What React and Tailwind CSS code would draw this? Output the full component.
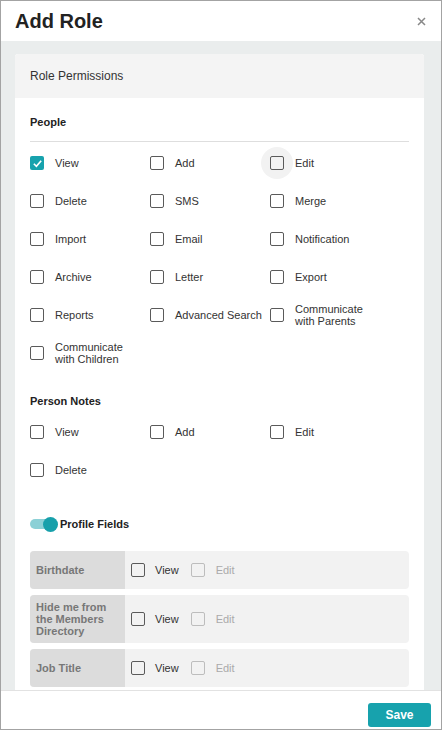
import React, { useState } from 'react';

const font = { fontFamily: '"Liberation Sans", Arial, sans-serif' };

const people = [
  ['View', 'Add', 'Edit'],
  ['Delete', 'SMS', 'Merge'],
  ['Import', 'Email', 'Notification'],
  ['Archive', 'Letter', 'Export'],
  ['Reports', 'Advanced Search', 'Communicate with Parents'],
  ['Communicate with Children'],
];

const notes = [
  ['View', 'Add', 'Edit'],
  ['Delete'],
];

const profileFields = ['Birthdate', 'Hide me from the Members Directory', 'Job Title'];

function Checkbox({ checked, disabled, hover }) {
  return (
    <span className="relative flex items-center justify-center w-[14px] h-[14px] shrink-0">
      {hover && <span className="absolute w-[32px] h-[32px] rounded-full bg-[#f2f2f2]" />}
      <span
        className={`relative flex items-center justify-center w-[14px] h-[14px] rounded-[2px] ${
          checked
            ? 'bg-[#17a2ad]'
            : disabled
            ? 'border-[1.3px] border-[#bdbdbd]'
            : 'border-[1.4px] border-[#5a5a5a]'
        }`}
      >
        {checked && (
          <svg width="11" height="11" viewBox="0 0 12 12">
            <path d="M2 6.3 L4.8 9 L10 3" fill="none" stroke="#fff" strokeWidth="1.8" />
          </svg>
        )}
      </span>
    </span>
  );
}

function PermGrid({ rows, checkedKey, hoverKey }) {
  return (
    <div>
      {rows.map((row, i) => (
        <div key={i} className="grid grid-cols-[120px_120px_120px] h-[38px] items-center">
          {row.map((label, j) => (
            <div key={j} className="flex items-center gap-[11px]">
              <Checkbox checked={checkedKey === `${i}-${j}`} hover={hoverKey === `${i}-${j}`} />
              <span className="text-[11px] leading-[12px] text-[#333] max-w-[88px]">{label}</span>
            </div>
          ))}
        </div>
      ))}
    </div>
  );
}

export default function App() {
  const [on] = useState(true);

  return (
    <div style={font} className="w-[442px] h-[730px] border border-[#a3a3a3] bg-white flex flex-col overflow-hidden">
      {/* Header */}
      <header className="h-[40px] shrink-0 flex items-center justify-between pl-[14px] pr-[15px]">
        <h1 className="text-[20px] font-bold text-[#222]">Add Role</h1>
        <svg width="9" height="9" viewBox="0 0 9 9">
          <path d="M1 1 L8 8 M8 1 L1 8" stroke="#888" strokeWidth="1.5" />
        </svg>
      </header>

      {/* Body */}
      <main className="flex-1 overflow-hidden bg-[#eaeded] pt-[13px] pl-[14px] pr-[17px]">
        <div className="bg-white rounded-t-[3px]">
          <div className="h-[44px] bg-[#f4f4f4] rounded-t-[3px] flex items-center px-[15px]">
            <span className="text-[12px] text-[#333]">Role Permissions</span>
          </div>

          <div className="px-[15px] pt-[18px]">
            <h2 className="text-[11px] leading-[13px] font-bold text-[#222]">People</h2>
            <div className="mt-[12px] h-px bg-[#dedede]" />
            <div className="mt-[2px]">
              <PermGrid rows={people} checkedKey="0-0" hoverKey="0-2" />
            </div>

            <h2 className="mt-[23px] text-[11px] leading-[13px] font-bold text-[#222]">Person Notes</h2>
            <div className="mt-[5px]">
              <PermGrid rows={notes} />
            </div>

            {/* Profile fields toggle */}
            <div className="mt-[27px] h-[16px] flex items-center">
              <div className="relative w-[28px] h-[16px] flex items-center">
                <span className={`w-[24px] h-[10px] rounded-full ${on ? 'bg-[#8bd0d6]' : 'bg-gray-300'}`} />
                <span className="absolute left-[13px] w-[15px] h-[15px] rounded-full bg-[#17a0ab]" />
              </div>
              <span className="ml-[2px] text-[11px] font-bold text-[#222]">Profile Fields</span>
            </div>

            <div className="mt-[19px] flex flex-col gap-[6px]">
              {profileFields.map((f) => (
                <div key={f} className="flex min-h-[38px] rounded-[4px] overflow-hidden bg-[#f2f2f2]">
                  <div className="w-[95px] shrink-0 bg-[#dcdcdc] px-[6px] py-[6px] flex items-center">
                    <span className="text-[11px] leading-[12px] font-bold text-[#777]">{f}</span>
                  </div>
                  <div className="flex items-center pl-[6px]">
                    <Checkbox />
                    <span className="ml-[10px] text-[11px] text-[#333]">View</span>
                    <span className="ml-[12px]">
                      <Checkbox disabled />
                    </span>
                    <span className="ml-[11px] text-[11px] text-[#aaa]">Edit</span>
                  </div>
                </div>
              ))}
            </div>
            <div className="h-[20px]" />
          </div>
        </div>
      </main>

      {/* Footer */}
      <footer className="h-[39px] shrink-0 border-t border-[#e2e2e2] flex justify-end items-start pt-[12px] pr-[10px]">
        <button className="w-[63px] h-[24px] rounded-[3px] bg-[#17a2ad] text-white text-[12px] font-bold">
          Save
        </button>
      </footer>
    </div>
  );
}
